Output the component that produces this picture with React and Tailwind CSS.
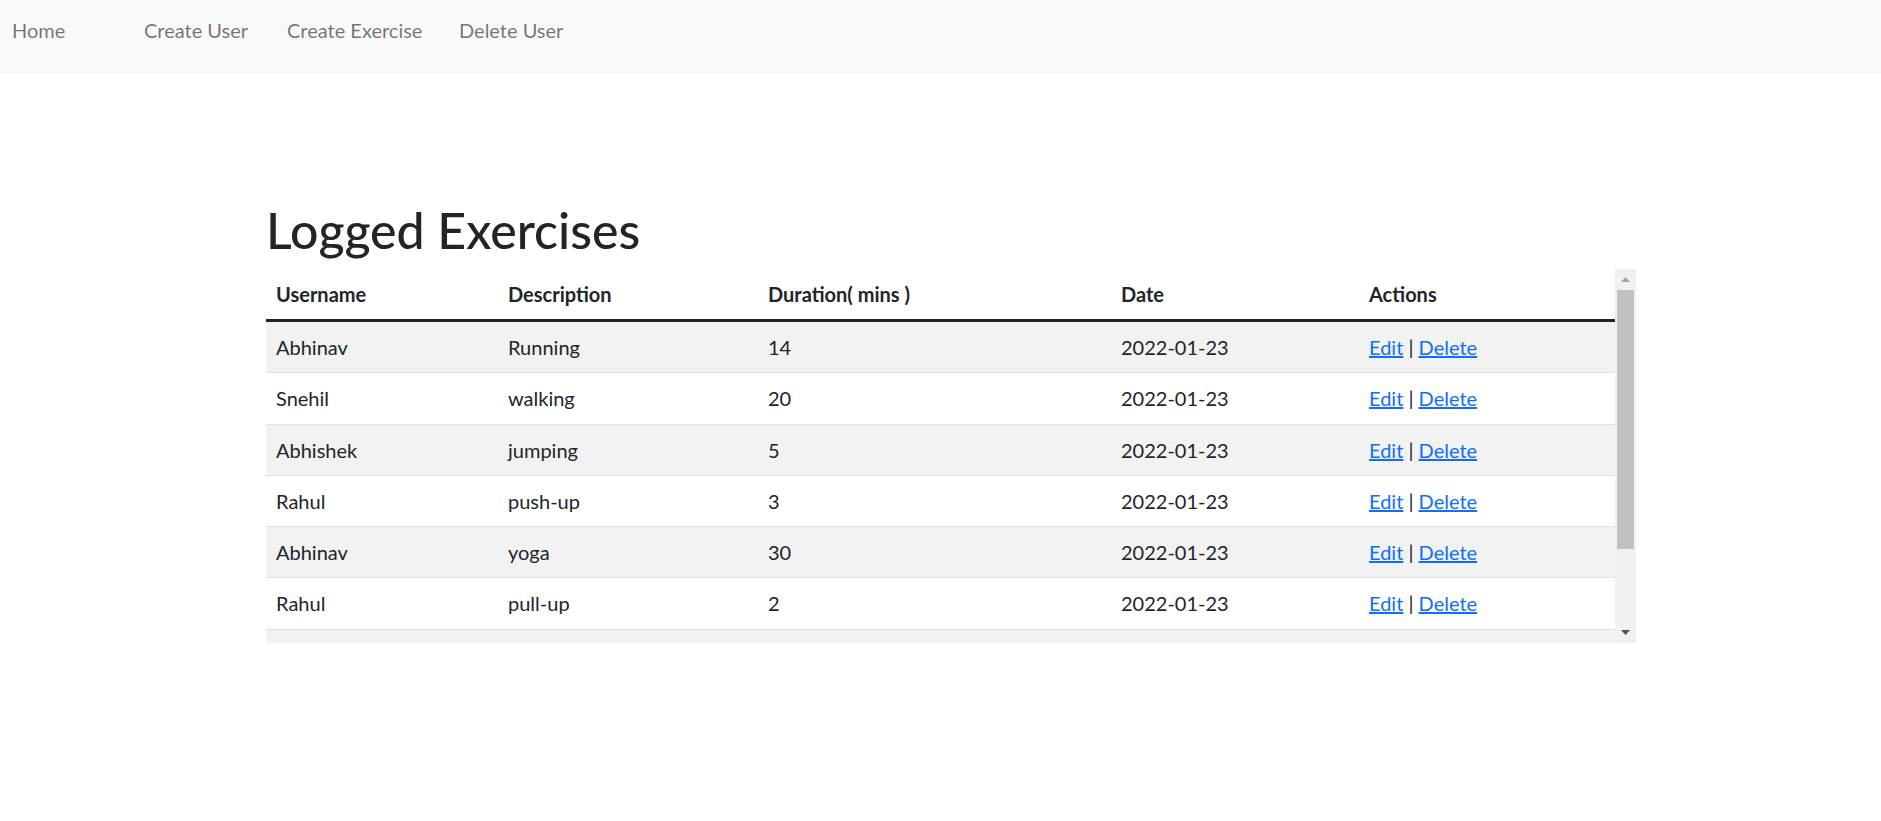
import React from "react";

const rows = [
  ["Abhinav", "Running", "14", "2022-01-23"],
  ["Snehil", "walking", "20", "2022-01-23"],
  ["Abhishek", "jumping", "5", "2022-01-23"],
  ["Rahul", "push-up", "3", "2022-01-23"],
  ["Abhinav", "yoga", "30", "2022-01-23"],
  ["Rahul", "pull-up", "2", "2022-01-23"],
];

const cols = "grid grid-cols-[232px_260px_353px_248px_1fr] items-center";

export default function App() {
  return (
    <div
      className="min-h-screen bg-white text-[#212529]"
      style={{ fontFamily: "Lato, 'Open Sans', sans-serif" }}
    >
      <nav className="h-[74px] bg-[#f8f9fa] flex items-start pt-[15px] pl-[12px] text-[20px] leading-[30px] text-black/55">
        <a className="w-[132px]">Home</a>
        <a className="w-[143px]">Create User</a>
        <a className="w-[172px]">Create Exercise</a>
        <a>Delete User</a>
      </nav>
      <main className="pt-[126px] pl-[266px]">
        <h1 className="text-[50px] leading-[60px] font-medium mb-[9px]">Logged Exercises</h1>
        <div className="w-[1370px] h-[374px] flex overflow-hidden text-[20px] leading-[30px]">
          <div className="w-[1349px] overflow-hidden">
            <div className={`${cols} h-[50px] border-b-[3px] border-[#212529] font-bold box-content`}>
              <div className="pl-[10px]">Username</div>
              <div className="pl-[10px]">Description</div>
              <div className="pl-[10px]">Duration( mins )</div>
              <div className="pl-[10px]">Date</div>
              <div className="pl-[10px]">Actions</div>
            </div>
            {rows.map((r, i) => (
              <div
                key={i}
                className={`${cols} h-[51.25px] border-b border-[#dee2e6] ${i % 2 === 0 ? "bg-[#f2f2f2]" : "bg-white"}`}
              >
                {r.map((c, j) => (
                  <div key={j} className="pl-[10px]">{c}</div>
                ))}
                <div className="pl-[10px]">
                  <a className="text-[#0d6efd] underline">Edit</a> |{" "}
                  <a className="text-[#0d6efd] underline">Delete</a>
                </div>
              </div>
            ))}
            <div className="h-[51px] bg-[#f2f2f2]" />
          </div>
          <div className="w-[21px] h-full bg-[#f1f1f1] flex flex-col">
            <div className="h-[21px] flex items-center justify-center">
              <svg width="9" height="5" viewBox="0 0 9 5">
                <polygon points="0,5 9,5 4.5,0" fill="#a3a3a3" />
              </svg>
            </div>
            <div className="h-[259px] mx-[2px] bg-[#c1c1c1]" />
            <div className="flex-1" />
            <div className="h-[21px] flex items-center justify-center">
              <svg width="9" height="5" viewBox="0 0 9 5">
                <polygon points="0,0 9,0 4.5,5" fill="#505050" />
              </svg>
            </div>
          </div>
        </div>
      </main>
    </div>
  );
}
